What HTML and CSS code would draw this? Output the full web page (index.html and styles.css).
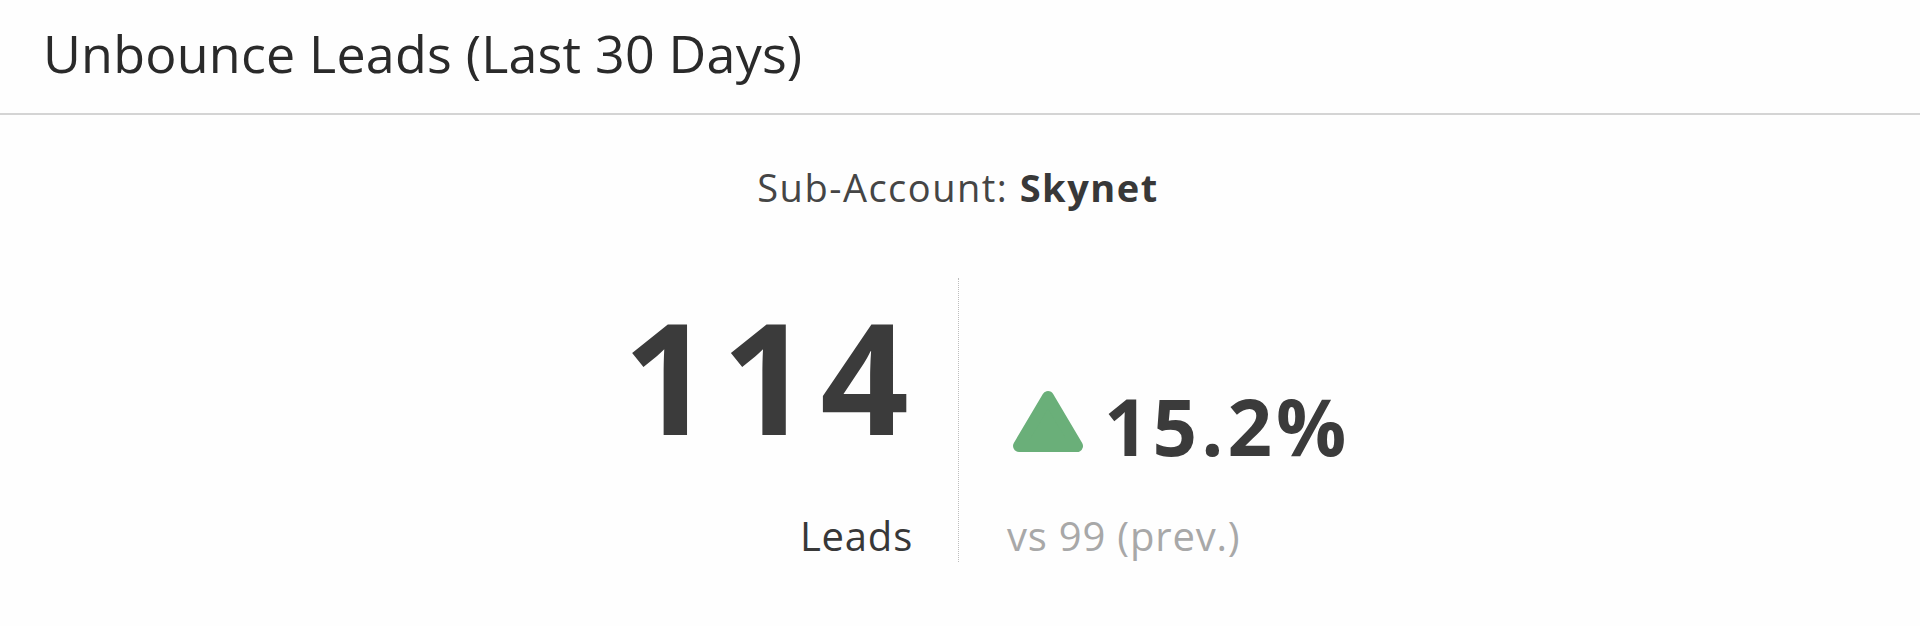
FILE: index.html
```html
<!DOCTYPE html>
<html lang="en">
<head>
<meta charset="utf-8">
<title>Unbounce Leads</title>
<link rel="stylesheet" href="styles.css">
</head>
<body>
<div class="widget">
  <header class="widget-header">
    <h1 class="widget-title">Unbounce Leads (Last 30 Days)</h1>
  </header>
  <main class="widget-body">
    <p class="sub-account">Sub-Account: <strong>Skynet</strong></p>
    <div class="metrics">
      <div class="metric metric-main">
        <div class="big-value">114</div>
        <div class="label">Leads</div>
      </div>
      <div class="metric metric-compare">
        <div class="change">
          <svg class="trend-up" width="72" height="63" viewBox="0 0 72 63" aria-hidden="true">
            <polygon points="36,7 65,56 7,56" fill="#6aaf79" stroke="#6aaf79" stroke-width="12" stroke-linejoin="round"/>
          </svg>
          <span class="change-value">15.2%</span>
        </div>
        <div class="label label-muted">vs 99 (prev.)</div>
      </div>
    </div>
  </main>
</div>
</body>
</html>
```
FILE: styles.css
```css
html, body {
  margin: 0;
  padding: 0;
  background: #ffffff;
}

body {
  font-family: "Open Sans", "Noto Sans", "Liberation Sans", sans-serif;
  color: #333333;
}

.widget {
  width: 1920px;
  height: 626px;
  background: #fefefe;
}

.widget-header {
  height: 113px;
  border-bottom: 2px solid #d4d4d4;
  padding-left: 43px;
  box-sizing: content-box;
}

.widget-title {
  margin: 0;
  font-size: 52px;
  font-weight: 400;
  line-height: 106px;
  color: #2a2a2a;
  letter-spacing: 0.2px;
}

.widget-body {
  padding-right: 4px;
}

.sub-account {
  margin: 47px 0 0;
  text-align: center;
  font-size: 38px;
  line-height: 50px;
  color: #454545;
  letter-spacing: 1.5px;
}

.sub-account strong {
  font-weight: 700;
  color: #383838;
}

.metrics {
  display: grid;
  grid-template-columns: 1fr 1fr;
  margin-top: 66px;
}

.metric-main {
  text-align: right;
  padding-right: 39px;
}

.metric-compare {
  border-left: 1px dotted #bdbdbd;
  padding-left: 53px;
}

.big-value {
  font-size: 155px;
  font-weight: 700;
  line-height: 194px;
  color: #3b3b3b;
  letter-spacing: 10px;
}

.label {
  margin-top: 38px;
  font-size: 40px;
  line-height: 52px;
  color: #383838;
  letter-spacing: 0.8px;
}

.metric-main .label {
  margin-right: 6px;
}

.label-muted {
  color: #a8a8a8;
  margin-left: -5px;
}

.change {
  height: 194px;
  display: flex;
  align-items: flex-end;
  gap: 20px;
  padding-bottom: 7px;
  box-sizing: border-box;
}

.trend-up {
  display: block;
  margin-bottom: 12px;
}

.change-value {
  font-size: 78px;
  font-weight: 700;
  line-height: 78px;
  color: #3b3b3b;
  letter-spacing: 4px;
}
```
